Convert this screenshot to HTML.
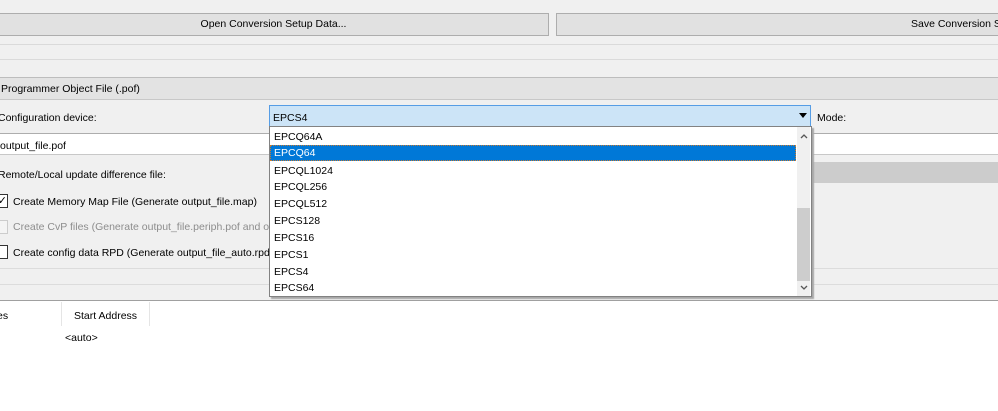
<!DOCTYPE html>
<html><head><style>
body{margin:0;width:998px;height:410px;background:#f0f0f0;font-family:"Liberation Sans",sans-serif;font-size:10.5px;color:#000;position:relative;overflow:hidden}
.a{position:absolute;white-space:nowrap}
.btn{position:absolute;background:#e1e1e1;border:1px solid #adadad;box-sizing:border-box;height:23px;top:13px;line-height:21px;white-space:nowrap;overflow:hidden}
.item{position:absolute;left:4px;height:17px;line-height:17px;top:2px}
</style></head><body>
<div class="btn" style="left:-2px;width:551px;text-align:center">Open Conversion Setup Data...</div>
<div class="btn" style="left:556px;width:460px;padding-left:354px">Save Conversion Setup</div>
<div class="a" style="left:0;top:44px;width:998px;height:1px;background:#dadada"></div>
<div class="a" style="left:0;top:59px;width:998px;height:1px;background:#dadada"></div>
<div class="a" style="left:0;top:77px;width:998px;height:21px;background:#e3e3e3;border-top:1px solid #bdbdbd;border-bottom:1px solid #c8c8c8"></div>
<div class="a" style="left:1px;top:83px">Programmer Object File (.pof)</div>
<div class="a" style="left:-2px;top:112px">Configuration device:</div>
<div class="a" style="left:817px;top:112px">Mode:</div>
<div class="a" style="left:-1px;top:133px;width:1000px;height:20px;background:#fff;border-top:1px solid #adadad;border-bottom:1px solid #c8c8c8"></div>
<div class="a" style="left:0;top:140px">output_file.pof</div>
<div class="a" style="left:-2px;top:169px">Remote/Local update difference file:</div>
<div class="a" style="left:811px;top:162px;width:187px;height:21px;background:#cccccc"></div>
<div class="a" style="left:-6px;top:194px;width:12px;height:12px;border:1px solid #333;background:#fff;font-size:11px;line-height:12px;text-align:right">✓</div>
<div class="a" style="left:13px;top:196px">Create Memory Map File (Generate output_file.map)</div>
<div class="a" style="left:-6px;top:220px;width:12px;height:12px;border:1px solid #ccc;background:#f4f4f4"></div>
<div class="a" style="left:13px;top:221px;color:#8d8d8d">Create CvP files (Generate output_file.periph.pof and output_file.core.rbf)</div>
<div class="a" style="left:-6px;top:245px;width:12px;height:12px;border:1px solid #333;background:#fff"></div>
<div class="a" style="left:13px;top:247px">Create config data RPD (Generate output_file_auto.rpd)</div>
<div class="a" style="left:0;top:268px;width:998px;height:1px;background:#dcdcdc"></div>
<div class="a" style="left:0;top:284px;width:998px;height:1px;background:#dcdcdc"></div>
<div class="a" style="left:0;top:300px;width:998px;height:110px;background:#fff;border-top:1px solid #a0a0a0"></div>
<div class="a" style="left:61px;top:302px;width:1px;height:24px;background:#e5e5e5"></div>
<div class="a" style="left:149px;top:302px;width:1px;height:24px;background:#e5e5e5"></div>
<div class="a" style="left:-3px;top:310px">es</div>
<div class="a" style="left:74px;top:310px">Start Address</div>
<div class="a" style="left:65px;top:332px">&lt;auto&gt;</div>
<div class="a" style="left:269px;top:105px;width:540px;height:20px;background:#cce4f7;border:1px solid #569de5"></div>
<div class="a" style="left:273px;top:112px">EPCS4</div>
<div class="a" style="left:799px;top:113px;width:0;height:0;border-left:4px solid transparent;border-right:4px solid transparent;border-top:5px solid #000"></div>
<div class="a" style="left:269px;top:126px;width:541px;height:169px;background:#fff;border:1px solid #828282;box-shadow:2px 2px 1px #a8a8a8">
<div class="a" style="left:0;top:18px;width:526px;height:16px;background:#0078d7;outline:1px dotted #c87a30;outline-offset:-1px"></div>
<div class="item">EPCQ64A</div>
<div class="item" style="top:18px;color:#fff">EPCQ64</div>
<div class="item" style="top:36px">EPCQL1024</div>
<div class="item" style="top:52px">EPCQL256</div>
<div class="item" style="top:69px">EPCQL512</div>
<div class="item" style="top:86px">EPCS128</div>
<div class="item" style="top:103px">EPCS16</div>
<div class="item" style="top:120px">EPCS1</div>
<div class="item" style="top:137px">EPCS4</div>
<div class="item" style="top:153px">EPCS64</div>
<div class="a" style="left:527px;top:0;width:13px;height:169px;background:#f0f0f0"></div>
<div class="a" style="left:527px;top:81px;width:13px;height:73px;background:#cdcdcd"></div>
<svg class="a" style="left:530px;top:6px" width="8" height="6"><path d="M1 5L4 2L7 5" stroke="#555" stroke-width="1.3" fill="none"/></svg>
<svg class="a" style="left:530px;top:158px" width="8" height="6"><path d="M1 1L4 4L7 1" stroke="#555" stroke-width="1.3" fill="none"/></svg>
</div>
</body></html>
